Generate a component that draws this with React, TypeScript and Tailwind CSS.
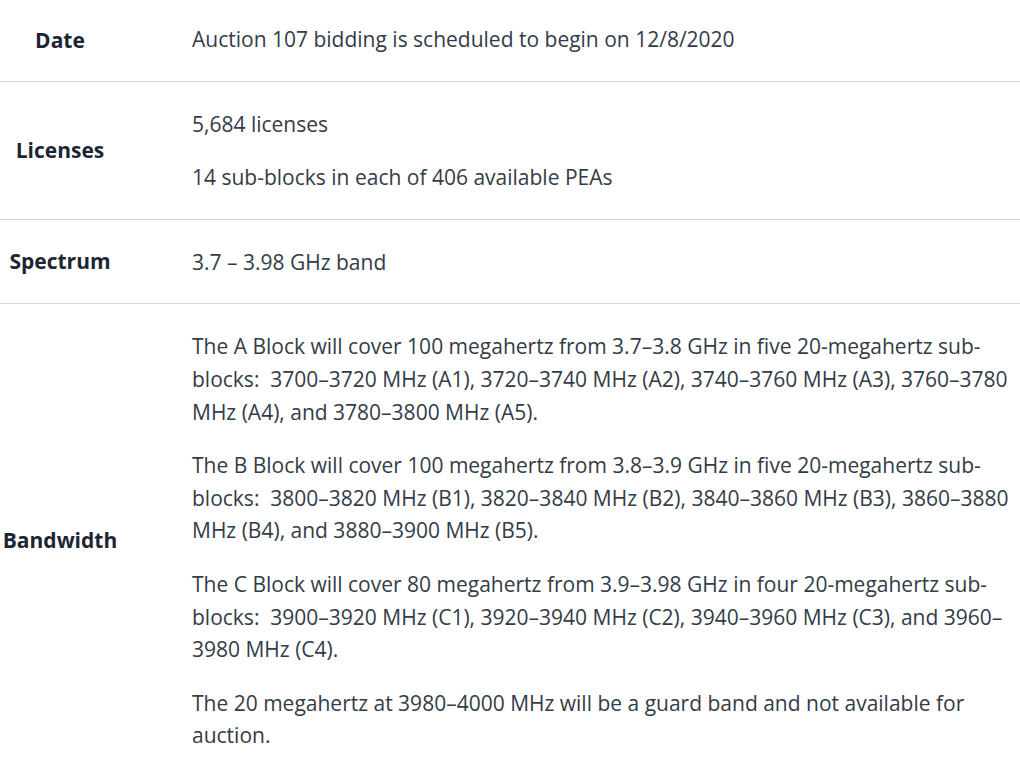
import React from "react";

const rows: { label: string; paras: string[] }[] = [
  { label: "Date", paras: ["Auction 107 bidding is scheduled to begin on 12/8/2020"] },
  { label: "Licenses", paras: ["5,684 licenses", "14 sub-blocks in each of 406 available PEAs"] },
  { label: "Spectrum", paras: ["3.7 – 3.98 GHz band"] },
  {
    label: "Bandwidth",
    paras: [
      "The A Block will cover 100 megahertz from 3.7–3.8 GHz in five 20-megahertz sub-blocks:\u00a0 3700–3720 MHz (A1), 3720–3740 MHz (A2), 3740–3760 MHz (A3), 3760–3780 MHz (A4), and 3780–3800 MHz (A5).",
      "The B Block will cover 100 megahertz from 3.8–3.9 GHz in five 20-megahertz sub-blocks:\u00a0 3800–3820 MHz (B1), 3820–3840 MHz (B2), 3840–3860 MHz (B3), 3860–3880 MHz (B4), and 3880–3900 MHz (B5).",
      "The C Block will cover 80 megahertz from 3.9–3.98 GHz in four 20-megahertz sub-blocks:\u00a0 3900–3920 MHz (C1), 3920–3940 MHz (C2), 3940–3960 MHz (C3), and 3960–3980 MHz (C4).",
      "The 20 megahertz at 3980–4000 MHz will be a guard band and not available for auction.",
    ],
  },
];

export default function App() {
  return (
    <div
      className="w-[1020px] bg-white text-[21px] leading-[32.6px] text-[#333c47]"
      style={{ fontFamily: '"Open Sans", "Noto Sans", sans-serif' }}
    >
      {rows.map((r, i) => (
        <div
          key={r.label}
          className={`grid grid-cols-[120px_1fr] ${i < rows.length - 1 ? "border-b border-[#d6d6d6]" : ""}`}
        >
          <div className="flex items-center justify-center font-bold text-[#1c2633]">{r.label}</div>
          <div className={`pl-[72px] pr-[8px] ${i === 0 ? "pt-[23px]" : "pt-[26px]"} pb-[25px] flex flex-col gap-[21px]`}>
            {r.paras.map((p, j) => (
              <p key={j}>{p}</p>
            ))}
          </div>
        </div>
      ))}
    </div>
  );
}
